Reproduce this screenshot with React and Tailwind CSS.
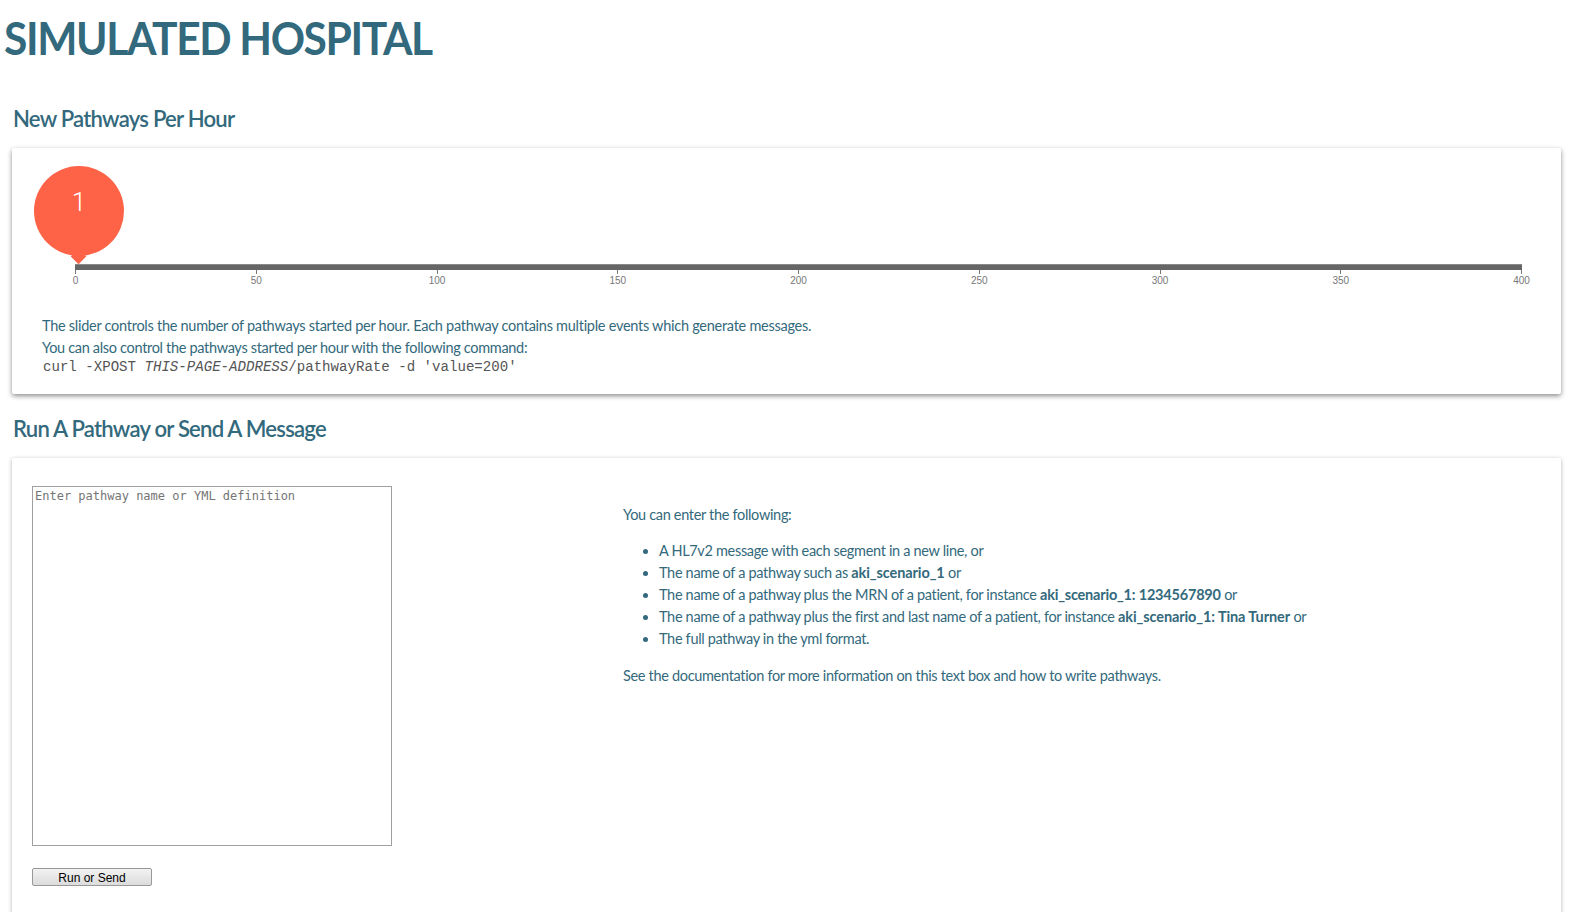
import React from 'react';

const ticks = [0, 50, 100, 150, 200, 250, 300, 350, 400];

const Slider = () => (
  <div className="relative ml-[63px] mr-[39px] pt-[116px]">
    {/* value bubble sits over the track */}
    <div className="absolute left-[-41px] top-[18px] w-[90px] h-[90px] rounded-full bg-[#ff6347] text-white text-center text-[26px] leading-[72px] font-['Roboto',sans-serif] font-light">
      1
    </div>
    <div className="absolute left-[-2px] top-[103px] w-[11px] h-[11px] bg-[#ff6347] rotate-45"></div>
    <div className="h-[6px] bg-[#666666] border-t border-t-[#888888]"></div>
    <div className="flex justify-between">
      {ticks.map((t) => (
        <div key={t} className="w-px flex flex-col items-center">
          <div className="w-px h-[4px] bg-[#777777]"></div>
          <span className="text-[10px] leading-[12px] mt-[1px] text-[#777777] font-['Liberation_Sans',sans-serif]">{t}</span>
        </div>
      ))}
    </div>
  </div>
);

const Heading = ({ children }) => (
  <h2 className="pl-[13px] text-[23px] leading-[30px] font-semibold tracking-[-0.8px] text-[#33697c]">
    <span className="inline-block origin-left scale-x-[0.96] whitespace-nowrap">{children}</span>
  </h2>
);

const App = () => {
  return (
    <div className="h-[912px] overflow-hidden bg-white font-['Lato',sans-serif] text-[#33697c]">
      <h1 className="pl-[4px] pt-[12px] text-[46px] leading-[52px] font-bold tracking-[-1.5px] text-[#33697c]">
        <span className="inline-block origin-left scale-x-[0.925] whitespace-nowrap">SIMULATED HOSPITAL</span>
      </h1>

      <div className="mt-[39px]">
        <Heading>New Pathways Per Hour</Heading>
      </div>
      <div className="mt-[15px] ml-[12px] mr-[9px] h-[246px] rounded-[2px] bg-white shadow-[0_2px_5px_rgba(0,0,0,0.45)]">
        <Slider />
        <div className="pl-[30px] pt-[28px] text-[14.5px] leading-[22px] tracking-[-0.27px]">
          <p>The slider controls the number of pathways started per hour. Each pathway contains multiple events which generate messages.</p>
          <p className="tracking-[-0.32px]">You can also control the pathways started per hour with the following command:</p>
          <p className="ml-[1px] font-['Liberation_Mono',monospace] text-[14.1px] leading-[16px] tracking-normal text-[#555555]">
            curl -XPOST <i>THIS-PAGE-ADDRESS</i>/pathwayRate -d 'value=200'
          </p>
        </div>
      </div>

      <div className="mt-[19px]">
        <Heading>Run A Pathway or Send A Message</Heading>
      </div>
      <div className="mt-[15px] ml-[12px] mr-[9px] h-[500px] rounded-[2px] bg-white shadow-[0_1px_4px_rgba(0,0,0,0.3)] flex">
        <div className="w-[611px] pl-[20px] pt-[28px] shrink-0">
          <textarea
            readOnly
            placeholder="Enter pathway name or YML definition"
            className="block w-[360px] h-[360px] border border-[#a0a0a0] px-[2px] py-[2px] text-[12px] leading-[14px] font-['DejaVu_Sans_Mono',monospace] resize-none placeholder:text-[#757575]"
          ></textarea>
          <button className="block mt-[22px] w-[120px] h-[18px] pt-[2px] border border-[#999999] rounded-[2px] bg-gradient-to-b from-[#f2f2f2] to-[#dcdcdc] text-[12px] leading-[14px] text-black font-['Liberation_Sans',sans-serif]">
            Run or Send
          </button>
        </div>
        <div className="pt-[46px] text-[14.5px] leading-[22px] tracking-[-0.32px]">
          <p>You can enter the following:</p>
          <ul className="mt-[14px] list-disc pl-[36px]">
            <li>A HL7v2 message with each segment in a new line, or</li>
            <li>The name of a pathway such as <b className="font-bold tracking-[-0.1px]">aki_scenario_1</b> or</li>
            <li>The name of a pathway plus the MRN of a patient, for instance <b className="font-bold tracking-[-0.2px]">aki_scenario_1: 1234567890</b> or</li>
            <li>The name of a pathway plus the first and last name of a patient, for instance <b className="font-bold tracking-[-0.1px]">aki_scenario_1: Tina Turner</b> or</li>
            <li>The full pathway in the yml format.</li>
          </ul>
          <p className="mt-[15px]">See the documentation for more information on this text box and how to write pathways.</p>
        </div>
      </div>
    </div>
  );
};

export default App;
